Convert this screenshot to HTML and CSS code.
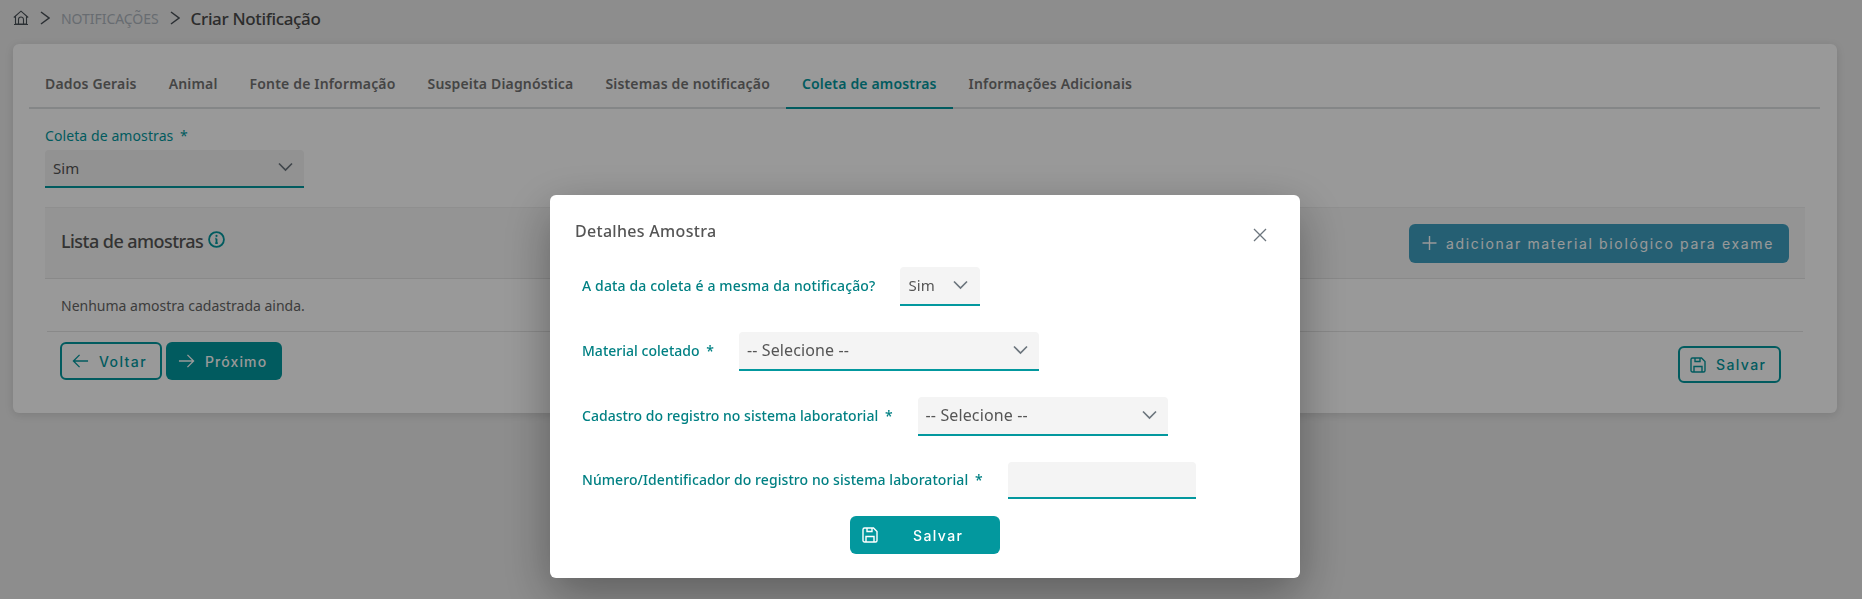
FILE: index.html
```html
<!DOCTYPE html>
<html lang="pt-BR">
<head>
    <meta charset="UTF-8">
    <meta name="viewport" content="width=device-width, initial-scale=1.0">
    <title>Criar Notificação</title>
    <link rel="stylesheet" href="styles.css">
</head>
<body>
    <nav class="breadcrumb">
        <svg class="home-icon" viewBox="0 0 16 16"><path d="M.8 7.500 8 1.200l7.200 6.300M2.500 6.300v7.700h11V6.300M1 14.500h14M5.500 14V9.500a2.500 2.500 0 0 1 5 0V14" /></svg>
        <svg class="crumb-sep" viewBox="0 0 10 14"><path d="M1 1l8 6-8 6" /></svg>
        <span class="crumb-link">NOTIFICAÇÕES</span>
        <svg class="crumb-sep" viewBox="0 0 10 14"><path d="M1 1l8 6-8 6" /></svg>
        <span class="crumb-current">Criar Notificação</span>
    </nav>

    <main class="card">
        <ul class="tabs">
            <li class="tab">Dados Gerais</li>
            <li class="tab">Animal</li>
            <li class="tab">Fonte de Informação</li>
            <li class="tab">Suspeita Diagnóstica</li>
            <li class="tab">Sistemas de notificação</li>
            <li class="tab active">Coleta de amostras</li>
            <li class="tab">Informações Adicionais</li>
        </ul>

        <div class="card-body">
            <label class="field-label">Coleta de amostras <span class="star">*</span></label>
            <div class="select select-main">
                <span>Sim</span>
                <svg class="chevron" viewBox="0 0 16 10"><path d="M1.500 1.500 8 8l6.500-6.500" /></svg>
            </div>

            <section class="panel">
                <header class="panel-head">
                    <h2>Lista de amostras
                        <svg class="info-icon" viewBox="0 0 16 16"><circle cx="8" cy="8" r="7" /><path d="M8 7.200v4.300M6.800 11.500h2.400M6.900 7.200H8" /><circle class="dot" cx="8" cy="4.600" r="1" /></svg>
                    </h2>
                    <button class="btn btn-add">
                        <svg class="btn-icon" viewBox="0 0 16 16"><path d="M8 1v14M1 8h14" /></svg>
                        adicionar material biológico para exame
                    </button>
                </header>
                <p class="panel-empty">Nenhuma amostra cadastrada ainda.</p>
            </section>

            <footer class="actions">
                <div class="actions-left">
                    <button class="btn btn-outline btn-back">
                        <svg class="btn-icon" viewBox="0 0 18 16"><path d="M17 8H1.500M8 1.500 1.500 8 8 14.500" /></svg>
                        Voltar
                    </button>
                    <button class="btn btn-solid btn-next">
                        <svg class="btn-icon" viewBox="0 0 18 16"><path d="M1 8h15.500M10 1.500 16.500 8 10 14.500" /></svg>
                        Próximo
                    </button>
                </div>
                <button class="btn btn-outline btn-save">
                    <svg class="save-icon" viewBox="0 0 16 16"><path d="M2.500 1h9L15 4.500V13.500a1.500 1.500 0 0 1-1.500 1.500h-11A1.500 1.500 0 0 1 1 13.500v-11A1.500 1.500 0 0 1 2.500 1zM4 15V9.500h8V15M5 1v3.500h5V1" /></svg>
                    Salvar
                </button>
            </footer>
        </div>
    </main>

    <div class="backdrop"></div>

    <div class="modal-wrap">
        <div class="modal">
            <div class="modal-head">
                <h3>Detalhes Amostra</h3>
                <svg class="close-icon" viewBox="0 0 14 14"><path d="M1 1l12 12M13 1 1 13" /></svg>
            </div>

            <div class="form-row">
                <label class="label-wide">A data da coleta é a mesma da notificação?</label>
                <div class="select select-sim">
                    <span>Sim</span>
                    <svg class="chevron" viewBox="0 0 16 10"><path d="M1.500 1.500 8 8l6.500-6.500" /></svg>
                </div>
            </div>
            <div class="form-row">
                <label>Material coletado <span class="star">*</span></label>
                <div class="select select-material">
                    <span>-- Selecione --</span>
                    <svg class="chevron" viewBox="0 0 16 10"><path d="M1.500 1.500 8 8l6.500-6.500" /></svg>
                </div>
            </div>
            <div class="form-row">
                <label>Cadastro do registro no sistema laboratorial <span class="star">*</span></label>
                <div class="select select-cadastro">
                    <span>-- Selecione --</span>
                    <svg class="chevron" viewBox="0 0 16 10"><path d="M1.500 1.500 8 8l6.500-6.500" /></svg>
                </div>
            </div>
            <div class="form-row form-row-last">
                <label class="label-id">Número/Identificador do registro no sistema laboratorial <span class="star">*</span></label>
                <input class="text-input" type="text">
            </div>

            <button class="btn btn-solid btn-modal-save">
                <svg class="save-icon" viewBox="0 0 16 16"><path d="M2.500 1h9L15 4.500V13.500a1.500 1.500 0 0 1-1.500 1.500h-11A1.500 1.500 0 0 1 1 13.500v-11A1.500 1.500 0 0 1 2.500 1zM4 15V9.500h8V15M5 1v3.500h5V1" /></svg>
                <span>Salvar</span>
            </button>
        </div>
    </div>
</body>
</html>
```

FILE: styles.css
```css
html, body {
    height: 100%;
}
body {
    margin: 0;
    height: 599px;
    overflow: hidden;
    background-color: #ebebeb;
    font-family: "Noto Sans", Arial, sans-serif;
    font-size: 14px;
    color: #555;
}
svg {
    fill: none;
    stroke: currentColor;
    flex: none;
}

/* breadcrumb */
.breadcrumb {
    display: flex;
    align-items: center;
    height: 36px;
    padding-left: 13px;
    margin-bottom: 8px;
}
.home-icon {
    width: 16px;
    height: 16px;
    stroke-width: 1.1;
    color: #495057;
}
.crumb-sep {
    width: 10px;
    height: 14px;
    margin: 0 11px 0 11px;
    stroke-width: 1.5;
    color: #495057;
}
.crumb-link {
    font-size: 14px;
    letter-spacing: -0.05px;
    color: #adb5bd;
}
.crumb-current {
    font-size: 17px;
    font-weight: 500;
    letter-spacing: -0.35px;
    color: #4a4a4a;
}

/* main card */
.card {
    width: 1824px;
    height: 369px;
    margin-left: 13px;
    padding: 20px 17px 0 16px;
    box-sizing: border-box;
    background: #fff;
    border-radius: 6px;
    box-shadow: 0 2px 8px rgba(0, 0, 0, 0.12);
}
.tabs {
    display: flex;
    margin: 0;
    padding: 0;
    list-style: none;
    border-bottom: 2px solid #dcdfe2;
}
.tab {
    height: 43px;
    padding: 0 16px;
    margin-bottom: -2px;
    box-sizing: content-box;
    line-height: 39px;
    font-size: 14px;
    font-weight: 600;
    letter-spacing: 0.17px;
    color: #737373;
}
.tab.active {
    color: #03989e;
    border-bottom: 2px solid #03989e;
}
.card-body {
    padding: 0 15px 0 16px;
}
.field-label {
    display: block;
    margin-top: 17px;
    height: 24px;
    line-height: 20px;
    font-size: 14px;
    letter-spacing: 0.09px;
    color: #03989e;
}
.star {
    margin-left: 3px;
}

/* selects */
.select {
    display: flex;
    align-items: center;
    justify-content: space-between;
    box-sizing: border-box;
    padding: 0 10px 0 8px;
    background: #f4f4f4;
    border-bottom: 2px solid #03989e;
    border-radius: 4px 4px 0 0;
    font-size: 16px;
    letter-spacing: 0.12px;
    line-height: 20px;
    color: #555;
}
.select span {
    margin-bottom: 1px;
}
.chevron {
    width: 17px;
    height: 10px;
    margin-bottom: 2px;
    stroke-width: 1.7;
    color: #6c757d;
}
.select-main {
    width: 259px;
    height: 38px;
    font-size: 15px;
}
.select-sim {
    width: 80px;
    height: 39px;
    padding-right: 11px;
    font-size: 15px;
}
.select-material {
    width: 300px;
    height: 39px;
}
.select-cadastro {
    width: 250px;
    height: 39px;
}

/* list panel */
.panel {
    margin-top: 19px;
}
.panel-head {
    display: flex;
    align-items: center;
    justify-content: space-between;
    height: 72px;
    box-sizing: border-box;
    padding: 0 16px;
    background: #f7f7f7;
    border-top: 1px solid #eee;
    border-bottom: 1px solid #e4e4e4;
}
.panel-head h2 {
    display: flex;
    align-items: flex-start;
    margin: 0 0 4px;
    font-size: 18px;
    font-weight: 500;
    letter-spacing: -0.55px;
    color: #555;
}
.info-icon {
    width: 17px;
    height: 17px;
    margin: 2px 0 0 5px;
    stroke-width: 1.7;
    color: #03989e;
}
.info-icon .dot {
    fill: currentColor;
    stroke: none;
}
.panel-empty {
    margin: 0 2px;
    padding: 0 14px;
    height: 53px;
    box-sizing: border-box;
    line-height: 54px;
    font-size: 14px;
    letter-spacing: 0;
    color: #666;
    border-bottom: 1px solid #e4e4e4;
}

/* buttons */
.btn {
    display: inline-flex;
    align-items: center;
    box-sizing: border-box;
    border: none;
    border-radius: 6px;
    font-family: Inter, "Noto Sans", sans-serif;
    font-size: 14px;
    font-weight: 500;
    letter-spacing: 1.4px;
    cursor: pointer;
}
.btn-icon {
    width: 17px;
    height: 16px;
    stroke-width: 1.4;
}
.save-icon {
    width: 16px;
    height: 16px;
    stroke-width: 1.4;
}
.btn-solid {
    background: #03989e;
    color: #fff;
}
.btn-outline {
    background: #fff;
    border: 2px solid #03989e;
    color: #03989e;
}
.btn-add {
    width: 380px;
    height: 39px;
    padding: 0 0 0 12px;
    gap: 8px;
    background: #3e9fc0;
    color: #fff;
    white-space: nowrap;
    font-weight: 400;
    letter-spacing: 1.65px;
}
.actions {
    display: flex;
    justify-content: space-between;
    align-items: flex-start;
    padding: 10px 24px 0 15px;
}
.actions-left {
    display: flex;
    gap: 4px;
}
.btn-back {
    width: 102px;
    height: 38px;
    padding-left: 10px;
    gap: 10px;
}
.btn-next {
    width: 116px;
    height: 38px;
    padding-left: 12px;
    gap: 10px;
    letter-spacing: 1.1px;
}
.btn-save {
    width: 103px;
    height: 37px;
    margin-top: 4px;
    padding-left: 10px;
    gap: 10px;
}

/* modal */
.backdrop {
    position: fixed;
    inset: 0;
    background: rgba(0, 0, 0, 0.4);
}
.modal-wrap {
    position: fixed;
    top: 195px;
    left: 550px;
}
.modal {
    width: 750px;
    height: 383px;
    box-sizing: border-box;
    padding: 0 32px;
    background: #fff;
    border-radius: 6px;
    box-shadow: 0 16px 48px rgba(0, 0, 0, 0.35);
}
.modal-head {
    display: flex;
    align-items: center;
    justify-content: space-between;
    height: 72px;
    margin: 0 0 0 -7px;
    box-sizing: border-box;
}
.modal-head h3 {
    margin: 0;
    font-size: 16px;
    font-weight: 500;
    letter-spacing: 0.3px;
    color: #555;
}
.close-icon {
    width: 14px;
    height: 14px;
    margin: 7px 1px 0 0;
    stroke-width: 1.3;
    color: #6c757d;
}
.form-row {
    display: flex;
    align-items: center;
    gap: 25px;
    height: 39px;
    margin-bottom: 26px;
}
.form-row label {
    padding-bottom: 2px;
    font-size: 14px;
    font-weight: 500;
    letter-spacing: 0.02px;
    color: #008083;
    white-space: nowrap;
}
.form-row .label-wide {
    letter-spacing: 0.14px;
}
.form-row .label-id {
    letter-spacing: 0.07px;
}
.form-row-last {
    height: 37px;
    margin-bottom: 17px;
}
.text-input {
    width: 188px;
    height: 37px;
    box-sizing: border-box;
    background: #f4f4f4;
    border: none;
    border-bottom: 2px solid #03989e;
    border-radius: 4px 4px 0 0;
    outline: none;
}
.btn-modal-save {
    display: flex;
    width: 150px;
    height: 38px;
    margin: 0 auto;
    padding-left: 12px;
    color: #fff;
}
.btn-modal-save span {
    margin-left: 35px;
}
```
